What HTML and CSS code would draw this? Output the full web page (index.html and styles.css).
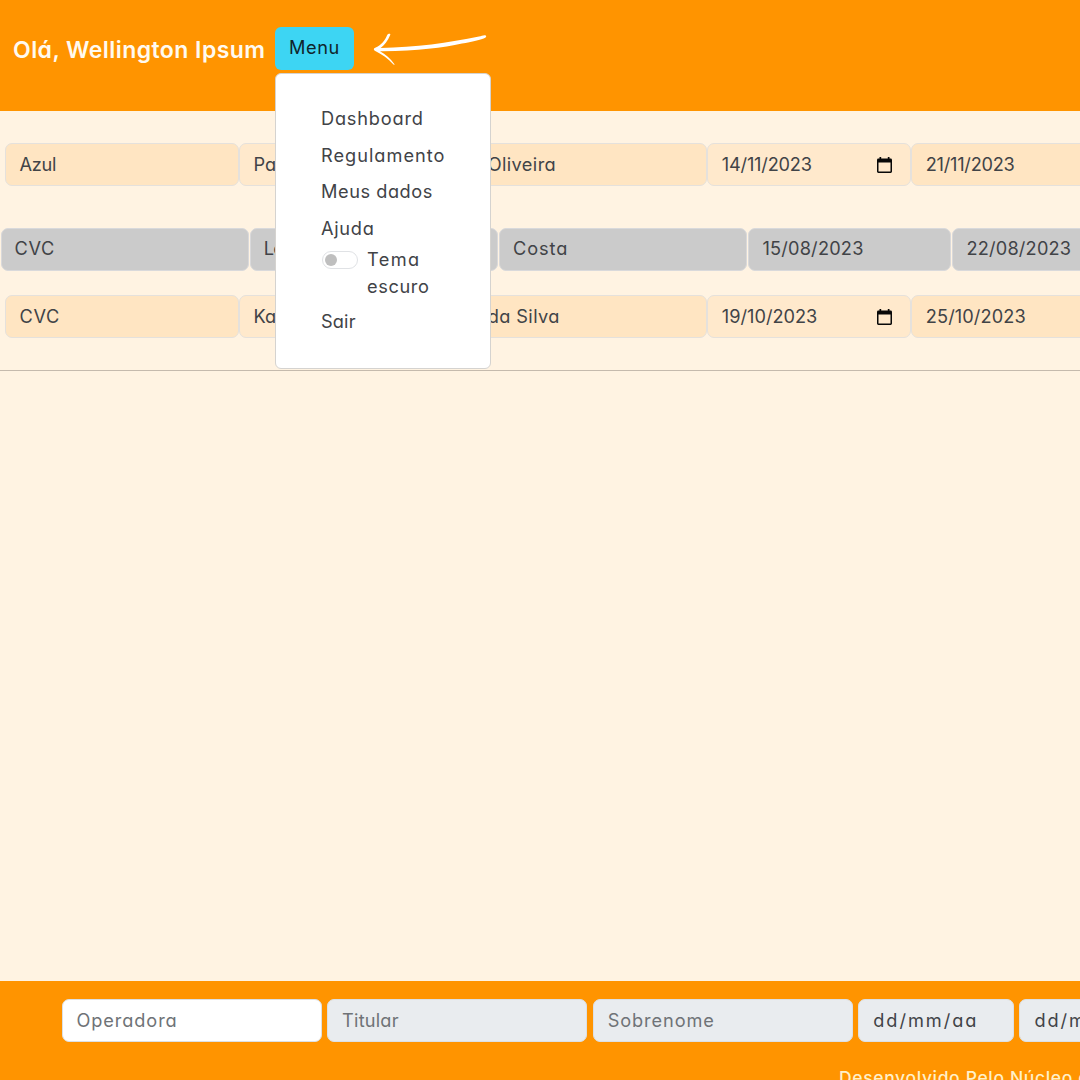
FILE: index.html
```html
<!DOCTYPE html>
<html lang="pt-BR">
<head>
<meta charset="utf-8">
<title>Dashboard</title>
<link rel="stylesheet" href="styles.css">
</head>
<body>
<header class="topbar">
  <h1 class="greeting">Olá, Wellington Ipsum</h1>
  <div class="dropdown">
    <button class="menu-button" type="button"><span class="t-menu">Menu</span></button>
    <nav class="dropdown-menu">
      <a class="item"><span class="t-dashboard">Dashboard</span></a>
      <a class="item"><span class="t-regulamento">Regulamento</span></a>
      <a class="item"><span class="t-meus">Meus dados</span></a>
      <a class="item"><span class="t-ajuda">Ajuda</span></a>
      <div class="theme">
        <span class="switch"></span>
        <span class="theme-label"><span class="t-tema">Tema</span> <span class="t-escuro">escuro</span></span>
      </div>
      <a class="item"><span class="t-sair">Sair</span></a>
    </nav>
  </div>
  <svg class="arrow" viewBox="0 0 114 32" width="114" height="32">
    <path d="M112 2.200C113.200 2.400 113.700 3.400 112.600 4.400C108 6.900 99 8.700 89 10.500C70 14.600 43 18.400 7 18.200C12.500 21.100 17.500 25.700 21.500 31.200C21.700 32 21.200 32 20.500 31.500C15 25.500 8.500 21.100 1.800 17.800C0.400 17 0.500 15.400 2.200 14.800C8.300 12.200 12 7.500 14.200 2C14.900 0.700 18 0.200 17.200 1.900C14.900 7.300 11.600 12 7.600 14.900C42 14.700 76 9.800 106 3.600C108.200 3 109.800 2.100 112 2.200Z"/>
  </svg>
</header>
<main class="content">
  <div class="row active">
    <div class="field name"><span class="t-azul">Azul</span></div>
    <div class="field name light"><span>Paulo</span></div>
    <div class="field name"><span class="t-oliveira">Oliveira</span></div>
    <div class="field date light"><span class="t-d1">14/11/2023</span>
      <svg class="calendar" viewBox="0 0 15 16" width="15" height="16"><path d="M2.500 0h1.700v1.500h6.600V0h1.700v1.500h1.100q1.400 0 1.400 1.400v11.700q0 1.400-1.400 1.400h-12.200Q0 16 0 14.600v-11.700Q0 1.500 1.400 1.500H2.500zM1.500 5.500v9h12v-9z"/></svg>
    </div>
    <div class="field date"><span class="t-d2">21/11/2023</span></div>
  </div>
  <div class="row past">
    <div class="field name"><span class="t-cvc">CVC</span></div>
    <div class="field name"><span class="t-lorena">Lorena</span></div>
    <div class="field name"><span class="t-costa">Costa</span></div>
    <div class="field date"><span class="t-d3">15/08/2023</span></div>
    <div class="field date"><span class="t-d4">22/08/2023</span></div>
  </div>
  <div class="row active">
    <div class="field name"><span class="t-cvc">CVC</span></div>
    <div class="field name light"><span>Karina</span></div>
    <div class="field name"><span class="t-silva">da Silva</span></div>
    <div class="field date light"><span class="t-d5">19/10/2023</span>
      <svg class="calendar" viewBox="0 0 15 16" width="15" height="16"><path d="M2.500 0h1.700v1.500h6.600V0h1.700v1.500h1.100q1.400 0 1.400 1.400v11.700q0 1.400-1.400 1.400h-12.200Q0 16 0 14.600v-11.700Q0 1.500 1.400 1.500H2.500zM1.500 5.500v9h12v-9z"/></svg>
    </div>
    <div class="field date"><span class="t-d6">25/10/2023</span></div>
  </div>
</main>
<footer class="bottombar">
  <div class="form">
    <div class="input editable"><span class="t-operadora">Operadora</span></div>
    <div class="input"><span class="t-titular">Titular</span></div>
    <div class="input"><span class="t-sobrenome">Sobrenome</span></div>
    <div class="input when"><span class="t-ddmm">dd/mm/aa</span></div>
    <div class="input when"><span class="t-ddmm">dd/mm/aa</span></div>
  </div>
  <p class="credit">Desenvolvido Pelo Núcleo de</p>
</footer>
</body>
</html>
```
FILE: styles.css
```css
* { box-sizing: border-box; }
body {
  margin: 0;
  width: 1080px;
  height: 1080px;
  overflow: hidden;
  display: flex;
  flex-direction: column;
  background: #fff3e2;
  color: #414347;
  font: 400 18.200px/27.4px Inter, "Open Sans", sans-serif;
  /* single-storey a */
  font-feature-settings: "cv11" 1;
  white-space: nowrap;
}
.topbar {
  flex: none;
  height: 111px;
  padding: 27px 0 0 13px;
  display: flex;
  align-items: flex-start;
  background: #ff9400;
}
.greeting {
  margin: 8px 0 0;
  width: 262px;
  font-size: 23px;
  line-height: 30px;
  font-weight: 560;
  letter-spacing: .45px;
  color: #fffaf0;
}
.dropdown { position: relative; }
.menu-button {
  display: block;
  width: 79px;
  height: 43px;
  padding: 0 0 1px 14px;
  border: 0;
  border-radius: 6px;
  background: #3dd5f3;
  color: #10252b;
  font: inherit;
  font-feature-settings: inherit;
  text-align: left;
}
.dropdown-menu {
  position: absolute;
  z-index: 2;
  top: 46px;
  left: 0;
  width: 216px;
  height: 296px;
  padding: 26px 45px;
  border: 1px solid #d5d3d0;
  border-radius: 6px;
  background: #fff;
}
.item { display: block; height: 36.5px; line-height: 37.500px; }
.theme { display: flex; height: 57px; }
.switch {
  width: 36px;
  height: 18px;
  margin: 5px 9px 0 1px;
  padding: 2px;
  border: 1px solid #e0e2e5;
  border-radius: 9px;
}
.switch::before {
  content: "";
  display: block;
  width: 12px;
  height: 12px;
  border-radius: 50%;
  background: #bfbfbf;
}
.theme-label { width: 70px; white-space: normal; }
.arrow { margin: 6px 0 0 18.500px; fill: #fff; }
.content {
  flex: none;
  height: 260px;
  padding-top: 32px;
  border-bottom: 1px solid #c5baad;
}
.row { display: flex; height: 43px; }
.row.active { padding-left: 4.500px; }
.row.past { margin: 42px 0 24px; padding-left: .5px; gap: 1px; }
.field {
  flex: none;
  width: 204px;
  padding: 0 14px;
  display: flex;
  align-items: center;
  justify-content: space-between;
  border: 1px solid #e5e1dc;
  border-radius: 7px;
  background: #ffe5c2;
}
.field.name { width: 234.1px; }
.field.light { background: #ffe9cc; }
.past .field { width: 203px; padding: 0 13px 2px; background: #cbcbcb; border-color: #d9d9db; }
.past .field.name { width: 248.3px; }
.calendar { margin: 0 4px 0 0; fill: #080808; }
.bottombar {
  flex: 1;
  min-height: 0;
  margin-top: 610px;
  padding-top: 18px;
  background: #ff9400;
}
.form { display: flex; gap: 5.6px; padding-left: 61.500px; }
.input {
  flex: none;
  width: 260px;
  height: 43px;
  padding: 0 14px;
  display: flex;
  align-items: center;
  border: 1px solid #dce0e4;
  border-radius: 7px;
  background: #e9ecef;
  color: #6f7377;
}
.input.editable { background: #fff; }
.input.when { width: 155.500px; color: #414347; }
.credit {
  margin: 24px 0 0 839px;
  font-size: 17.500px;
  line-height: 24px;
  font-weight: 500;
  letter-spacing: .65px;
  color: #fff0c8;
}

/* tracking per label */
.t-menu { letter-spacing: .6px; }
.t-dashboard { letter-spacing: .8px; }
.t-regulamento { letter-spacing: 1px; }
.t-meus { letter-spacing: .55px; }
.t-ajuda { letter-spacing: .7px; }
.t-tema { letter-spacing: 1.400px; }
.t-escuro { letter-spacing: .6px; }
.t-sair { letter-spacing: .15px; }
.t-azul { letter-spacing: -.3px; }
.t-oliveira { letter-spacing: .4px; }
.t-cvc { letter-spacing: .7px; }
.t-lorena { letter-spacing: -.8px; }
.t-costa { letter-spacing: .9px; }
.t-silva { letter-spacing: .4px; }
.t-d1 { letter-spacing: -.2px; }
.t-d2 { letter-spacing: -.25px; }
.t-d3 { letter-spacing: .2px; }
.t-d4 { letter-spacing: .2px; }
.t-d5 { letter-spacing: 0; }
.t-d6 { letter-spacing: .1px; }
.t-operadora { letter-spacing: .9px; }
.t-titular { letter-spacing: .2px; }
.t-sobrenome { letter-spacing: .9px; }
.t-ddmm { letter-spacing: 1.950px; }
```
